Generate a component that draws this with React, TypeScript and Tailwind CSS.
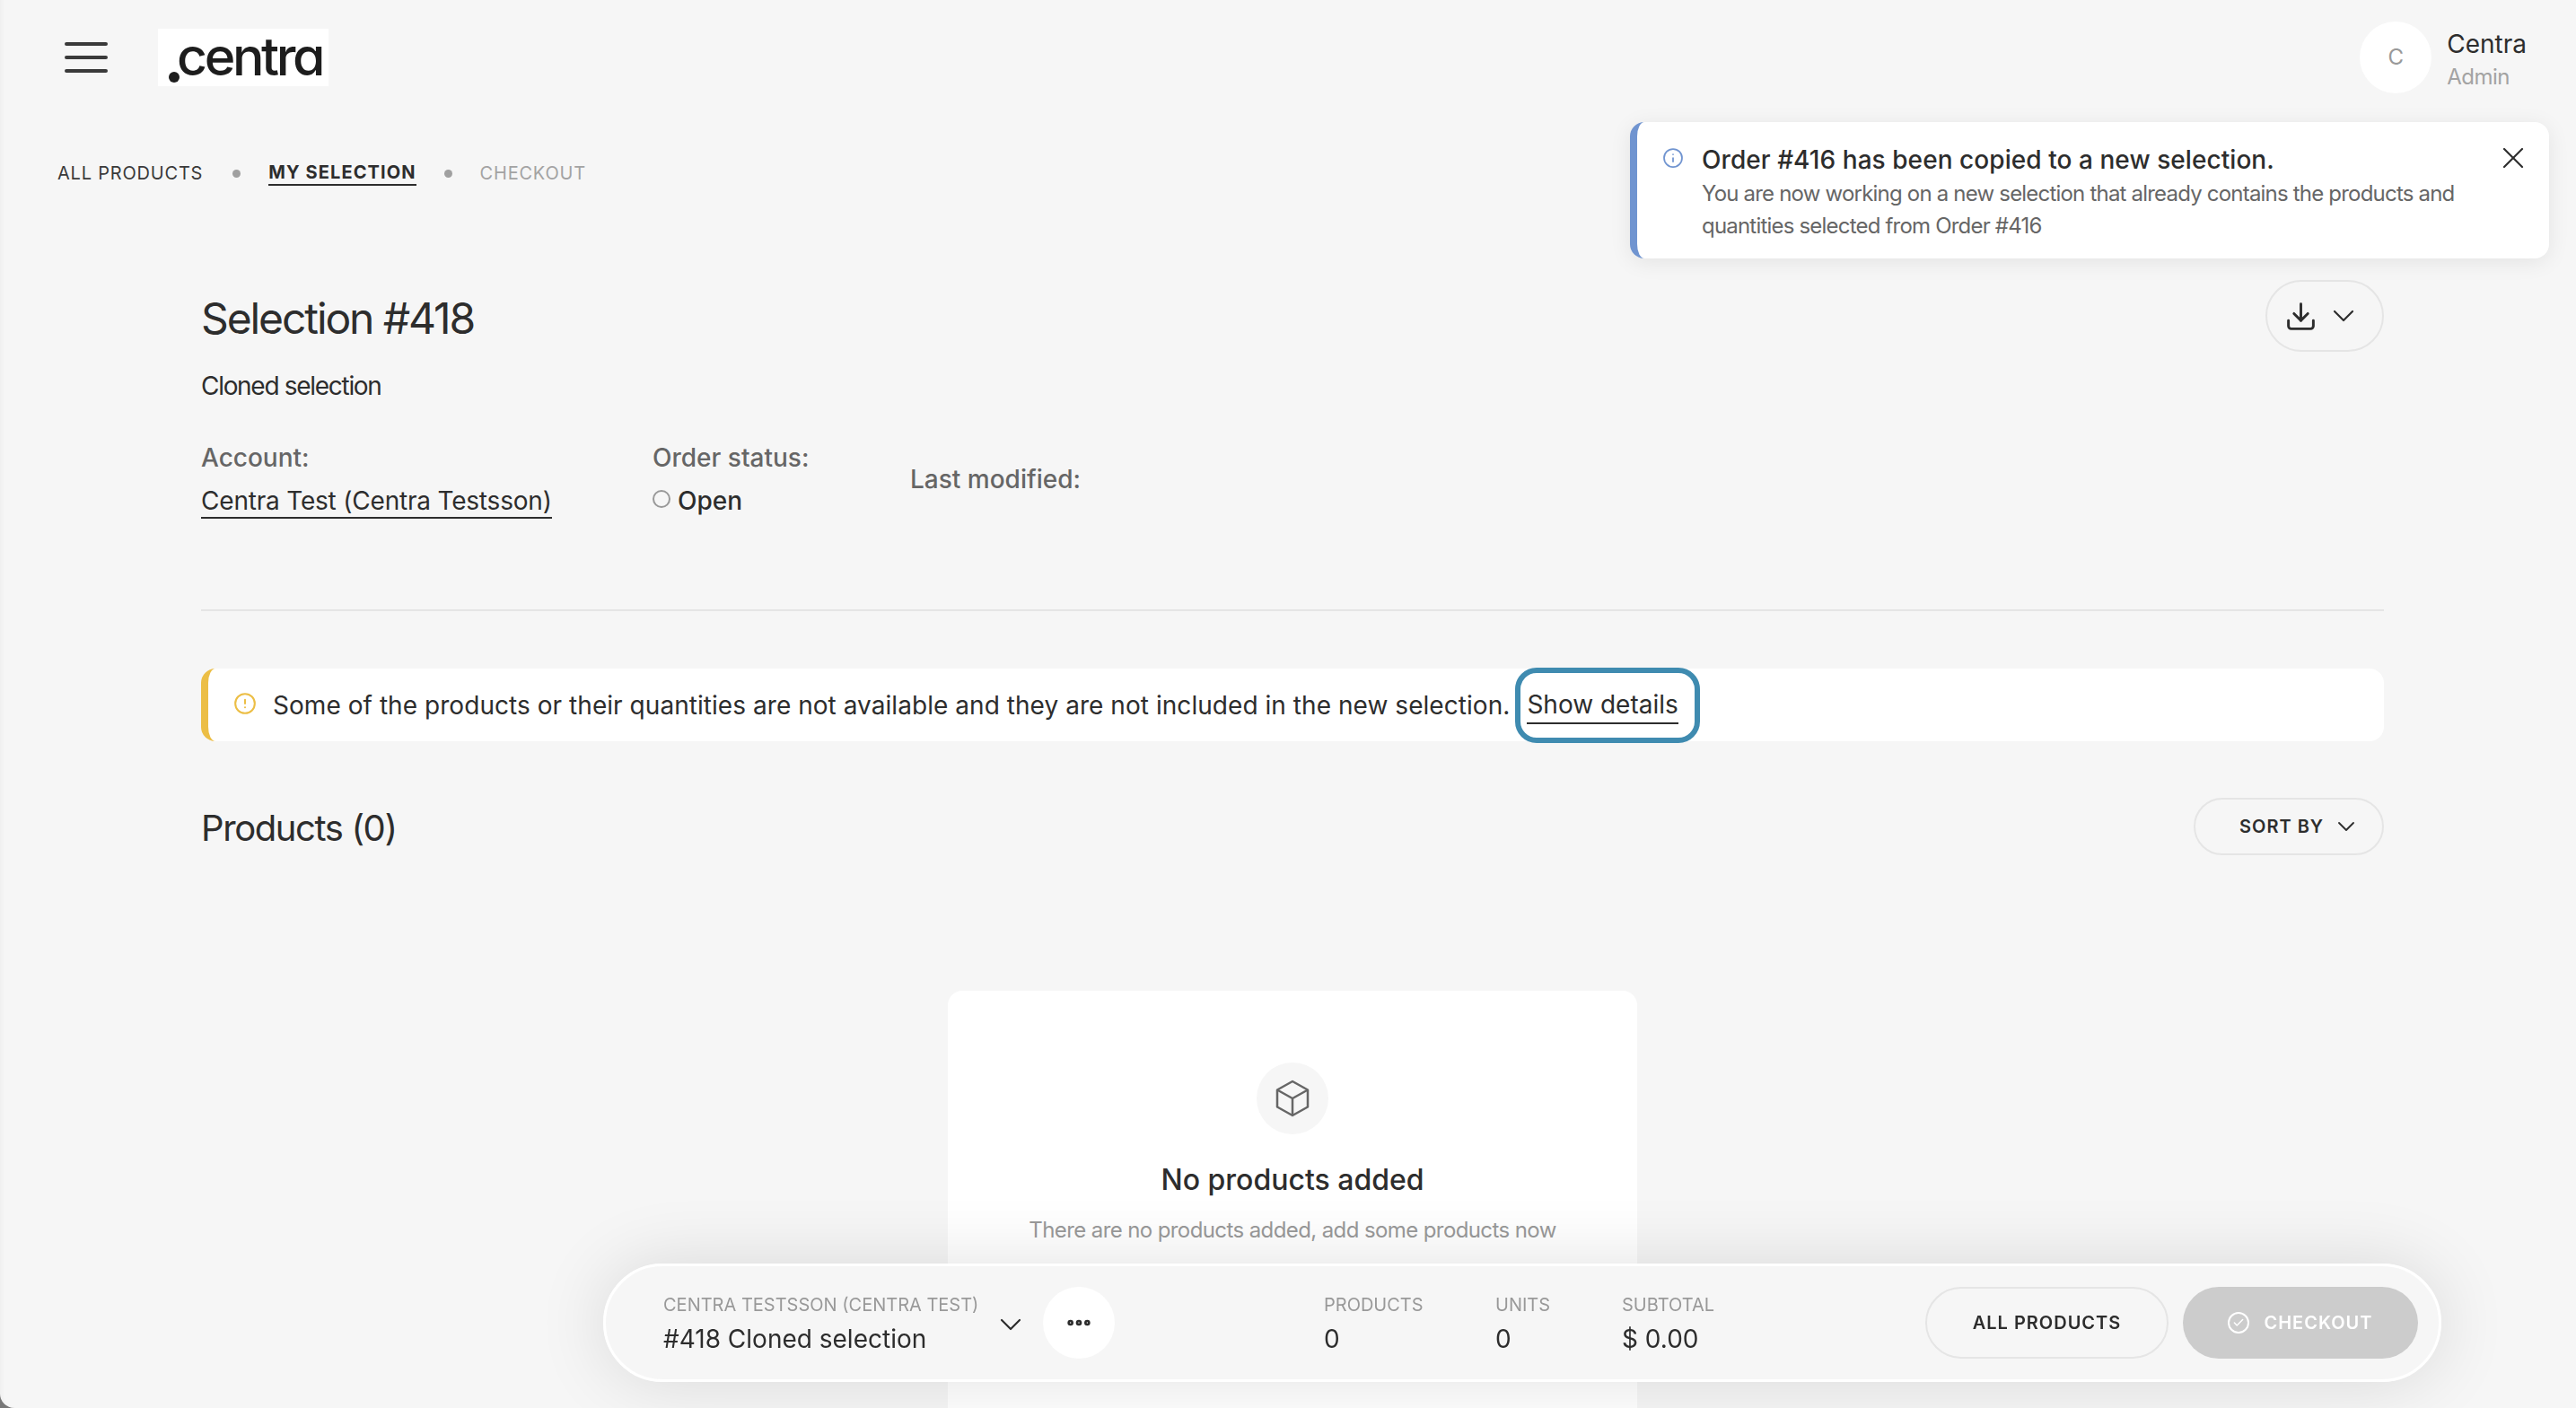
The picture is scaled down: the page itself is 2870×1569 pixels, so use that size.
import { Check, ChevronDown, CircleAlert, Download, Ellipsis, Info, X } from "lucide-react";

const font = "font-['Inter',sans-serif]";

function Stat({ label, value, className }: { label: string; value: string; className: string }) {
  return (
    <div className={className}>
      <div className="text-[20px] leading-[30px] text-[#999]">{label}</div>
      <div className="mt-[5px] text-[28px] leading-[36px] text-[#2d2d2d]">{value}</div>
    </div>
  );
}

function CubeIcon() {
  return (
    <svg width="44" height="44" viewBox="0 0 44 44" fill="none" stroke="#666" strokeWidth="2.5" strokeLinejoin="round">
      <path d="M22 3 L39 12.5 V31.5 L22 41 L5 31.5 V12.5 Z" />
      <path d="M5 12.5 L22 22 L39 12.5 M22 22 V41" />
    </svg>
  );
}

export default function App() {
  return (
    <div className="h-[1569px] overflow-hidden bg-[#777]">
      <div className={`${font} relative h-[1569px] overflow-hidden rounded-bl-[16px] bg-[#f6f6f6] text-[#2d2d2d] shadow-[inset_5px_0_4px_-3px_rgba(0,0,0,0.03)]`}>
        <div className="flex h-[136px] items-start justify-between pl-[72px] pr-[55px] pt-[24px]">
          <div className="flex items-center pt-[8px]">
            <div className="flex w-[48px] flex-col gap-[11px]">
              <div className="h-[4px] rounded-full bg-[#3a3a3a]" />
              <div className="h-[4px] rounded-full bg-[#3a3a3a]" />
              <div className="h-[4px] rounded-full bg-[#3a3a3a]" />
            </div>
            <div className="ml-[56px] flex h-[64px] w-[190px] items-center bg-white pl-[12px]">
              <span className="mt-[43px] size-[12px] shrink-0 rounded-full bg-[#1d1d1d]" />
              <span className="-ml-[3px] -mt-[4px] text-[59px] font-medium leading-none tracking-[-3.4px] text-[#1d1d1d] [font-feature-settings:'cv11']">
                centra
              </span>
            </div>
          </div>
          <div className="flex items-center gap-[17px]">
            <div className="flex size-[80px] items-center justify-center rounded-full bg-white text-[24px] text-[#999]">C</div>
            <div className="pt-[3px]">
              <div className="text-[28px] leading-[40px]">Centra</div>
              <div className="text-[24px] leading-[34px] text-[#a3a3a3] tracking-[-0.5px]">Admin</div>
            </div>
          </div>
        </div>

        <nav className="flex h-[114px] items-center pl-[64px] text-[20px] tracking-[0.8px]">
          <span className="text-[#3a3a3a]">ALL PRODUCTS</span>
          <span className="ml-[33px] mr-[31px] size-[9px] rounded-full bg-[#a0a0a0]" />
          <span className="border-b-2 border-[#2d2d2d] font-bold leading-[26px] tracking-[1.1px]">MY SELECTION</span>
          <span className="mx-[31px] size-[9px] rounded-full bg-[#a0a0a0]" />
          <span className="text-[#a3a3a3]">CHECKOUT</span>
        </nav>

        <main className="pl-[224px] pr-[214px]">
          <div className="flex items-start justify-between pt-[75px]">
            <h1 className="text-[48px] font-normal leading-[60px] tracking-[-2.1px]">Selection #418</h1>
            <button className="-mt-[13px] flex h-[80px] w-[132px] items-center justify-center gap-[9px] rounded-full border-2 border-[#e5e5e5] pr-[4px]">
              <Download size={37} strokeWidth={1.9} color="#2d2d2d" />
              <ChevronDown size={40} strokeWidth={1.3} color="#2d2d2d" />
            </button>
          </div>
          <div className="mt-[18px] text-[28px] leading-[40px] tracking-[-1.3px]">Cloned selection</div>

          <div className="mt-[40px] flex items-center">
            <div className="w-[503px]">
              <div className="text-[28px] font-medium leading-[40px] text-[#666]">Account:</div>
              <div className="mt-[8px] text-[28px] leading-[40px] tracking-[-0.2px]">
                <span className="inline-block border-b-2 border-[#2d2d2d] leading-[36px]">Centra Test (Centra Testsson)</span>
              </div>
            </div>
            <div className="w-[287px]">
              <div className="text-[28px] font-medium leading-[40px] text-[#666]">Order status:</div>
              <div className="mt-[8px] flex items-center gap-[8px] text-[28px] font-medium leading-[40px]">
                <span className="-mt-[4px] size-[20px] rounded-full border-2 border-[#999]" />
                Open
              </div>
            </div>
            <div className="text-[28px] font-medium leading-[40px] text-[#666]">Last modified:</div>
          </div>

          <div className="mt-[101px] h-[2px] bg-[#e5e5e5]" />

          <div className="mt-[64px] flex h-[81px] items-center rounded-[16px] border-l-[8px] border-[#ecbe45] bg-white pl-[28px]">
            <CircleAlert size={26} strokeWidth={1.9} color="#ecbe45" className="-mt-[4px]" />
            <span className="ml-[18px] text-[28px] leading-[40px] tracking-[0.05px]">
              Some of the products or their quantities are not available and they are not included in the new selection.
            </span>
            <span className="ml-[6px] flex h-[84px] items-center rounded-[24px] border-[6px] border-[#3f8bb0] pl-[7px] pr-[18px]">
              <span className="mt-[2px] border-b-2 border-[#2d2d2d] text-[28px] leading-[39px]">Show details</span>
            </span>
          </div>

          <div className="mt-[63px] flex items-center justify-between">
            <h2 className="pt-[3px] text-[40px] font-normal leading-[56px] tracking-[-1.4px]">Products (0)</h2>
            <button className="flex h-[64px] w-[212px] items-center gap-[9px] rounded-full border-2 border-[#e5e5e5] pl-[49px] text-[20px] font-semibold tracking-[1px]">
              SORT BY
              <ChevronDown size={32} strokeWidth={1.4} color="#2d2d2d" />
            </button>
          </div>

          <div className="mx-auto mt-[151px] flex h-[600px] w-[768px] flex-col items-center rounded-[16px] bg-white pt-[80px]">
            <div className="flex size-[80px] items-center justify-center rounded-full bg-[#f6f6f6]">
              <CubeIcon />
            </div>
            <div className="mt-[31px] text-[32px] font-medium leading-[40px]">No products added</div>
            <div className="mt-[16px] text-[24px] leading-[40px] tracking-[-0.6px] text-[#999]">There are no products added, add some products now</div>
            <div className="mt-[76px] h-[44px] w-[220px] rounded-full bg-[#e5e5e5]" />
          </div>
        </main>

        <div className="absolute left-[672px] top-[1408px] flex h-[132px] w-[2048px] items-center rounded-full border-[3px] border-white bg-[#f6f6f6]/95 pl-[64px] pr-[23px] shadow-[0_0_80px_rgba(0,0,0,0.12)] backdrop-blur-xl">
          <div className="w-[367px]">
            <div className="text-[20px] leading-[30px] text-[#999]">CENTRA TESTSSON (CENTRA TEST)</div>
            <div className="mt-[5px] text-[28px] leading-[36px]">#418 Cloned selection</div>
          </div>
          <ChevronDown size={40} strokeWidth={1.3} color="#2d2d2d" className="mt-[3px]" />
          <div className="ml-[16px] flex size-[80px] items-center justify-center rounded-full bg-white">
            <Ellipsis size={32} strokeWidth={3} color="#2d2d2d" />
          </div>
          <Stat label="PRODUCTS" value="0" className="ml-[233px] w-[191px]" />
          <Stat label="UNITS" value="0" className="w-[141px]" />
          <Stat label="SUBTOTAL" value="$ 0.00" className="w-[338px]" />
          <button className="flex h-[80px] w-[271px] items-center justify-center rounded-full border-2 border-[#e5e5e5] text-[20px] font-semibold tracking-[1px]">
            ALL PRODUCTS
          </button>
          <button className="ml-[16px] flex h-[80px] w-[262px] items-center justify-center gap-[16px] rounded-full bg-[#ccc] text-[20px] font-semibold tracking-[1px] text-white">
            <span className="flex size-[24px] items-center justify-center rounded-full border-2 border-white">
              <Check size={14} strokeWidth={2.5} color="#fff" />
            </span>
            CHECKOUT
          </button>
        </div>

        <div className="absolute left-[1816px] top-[136px] flex h-[152px] w-[1024px] rounded-[16px] border-l-[8px] border-[#7094d0] bg-white pl-[28px] pr-[20px] pt-[24px] shadow-[0_4px_24px_rgba(0,0,0,0.08)]">
          <Info size={24} strokeWidth={1.75} color="#7094d0" className="mt-[4px]" />
          <div className="ml-[20px] flex-1">
            <div className="text-[28px] font-medium leading-[36px] tracking-[0.06px]">Order #416 has been copied to a new selection.</div>
            <div className="mt-[2px] text-[24px] leading-[36px] tracking-[-0.8px] text-[#666]">
              You are now working on a new selection that already contains the products and
              <br />
              quantities selected from Order #416
            </div>
          </div>
          <X size={40} strokeWidth={1.3} color="#2d2d2d" className="-mt-[4px]" />
        </div>
      </div>
    </div>
  );
}
